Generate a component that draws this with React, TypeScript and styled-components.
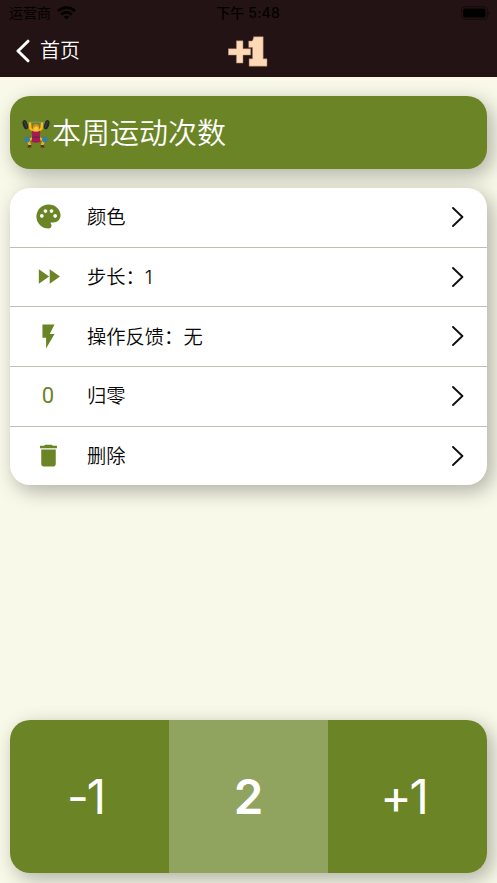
import React from "react";
import styled, { createGlobalStyle } from "styled-components";

const GREEN = "#6b8426";

const GlobalStyle = createGlobalStyle`
  * { box-sizing: border-box; }
  body {
    margin: 0;
    background: #f9f9e9;
    font-family: Inter, "Noto Sans CJK SC", sans-serif;
    font-weight: 400;
  }
`;

const Screen = styled.main`
  width: 100%;
  height: 883px;
  display: flex;
  flex-direction: column;
  overflow: hidden;
  background: #f9f9e9;
`;

const Header = styled.header`
  flex: none;
  height: 77px;
  background: #231314;
`;

const StatusBar = styled.div`
  height: 26px;
  padding: 0 7px 0 9px;
  display: grid;
  grid-template-columns: 1fr auto 1fr;
  align-items: center;
  color: #030101;
  font-size: 14px;
  line-height: 26px;
`;

const Carrier = styled.div`
  display: flex;
  align-items: center;
  gap: 6px;
`;

const Clock = styled.div`
  margin-right: 3px;
  font-weight: 500;
  letter-spacing: 0.15px;
`;

const Power = styled.div`
  display: flex;
  justify-content: flex-end;
`;

const NavBar = styled.nav`
  height: 51px;
  padding: 0 17px 2px 15px;
  display: grid;
  grid-template-columns: 1fr auto 1fr;
  align-items: center;
`;

const BackButton = styled.button`
  display: flex;
  align-items: center;
  gap: 10px;
  padding: 0;
  border: 0;
  background: none;
  color: #fff;
  font: 350 20px/30px Inter, "Noto Sans CJK SC", sans-serif;
`;

const BackLabel = styled.span`
  padding-top: 1px;
`;

const Content = styled.div`
  flex: 1;
  display: flex;
  flex-direction: column;
  padding: 19px 10px 10px;
`;

const Card = styled.section`
  flex: none;
  border-radius: 20px;
  box-shadow: 5px 6px 20px rgba(0, 0, 0, 0.3);
`;

const TitleCard = styled(Card)`
  height: 73px;
  padding: 2px 11px 0 12px;
  display: flex;
  align-items: center;
  gap: 2px;
  background: ${GREEN};
`;

const Title = styled.h1`
  margin: 0;
  color: #fff;
  font-size: 29px;
  line-height: 40px;
  font-weight: 350;
`;

const Menu = styled(Card)`
  height: 297.4px;
  margin-top: 19px;
  display: flex;
  flex-direction: column;
  overflow: hidden;
  background: #fff;
`;

const MenuRow = styled.div`
  flex: 1;
  display: grid;
  grid-template-columns: 77px 1fr 12px;
  align-items: center;
  padding-right: 23px;

  & + & { border-top: 1px solid #bfc0b0; }
`;

const RowIcon = styled.span`
  display: flex;
  justify-content: center;
  padding: 0 1px 1px 0;
  color: ${GREEN};
  font-family: Roboto, sans-serif;
  font-size: 22px;
  font-weight: 400;
`;

const RowLabel = styled.span`
  color: #080808;
  font-size: 19.3px;
  line-height: 28px;
  font-weight: 350;
`;

const Counter = styled(Card)`
  height: 153.4px;
  margin-top: auto;
  display: grid;
  grid-template-columns: repeat(3, 1fr);
  overflow: hidden;
`;

const CounterCell = styled.button<{ $total?: boolean }>`
  padding: ${(p) => (p.$total ? "0" : "0 8px 0 0")};
  border: 0;
  color: #fff;
  background: ${(p) => (p.$total ? "#90a45f" : GREEN)};
  font-family: Inter, sans-serif;
  font-size: 47.5px;
  font-weight: ${(p) => (p.$total ? 600 : 400)};
  letter-spacing: ${(p) => (p.$total ? "0" : "-2.2px")};
`;

const Wifi = () => (
  <svg width="19" height="14" viewBox="0 0 19 14" fill="none" stroke="currentColor" strokeWidth="2.7">
    <path d="M1 5.1C5.7.5 13.3.5 18 5.1M4.2 8.5c3-2.8 7.6-2.8 10.6 0" />
    <path d="M9.5 13.6 6.7 10.8c1.6-1.4 4-1.4 5.6 0z" fill="currentColor" stroke="none" />
  </svg>
);

const Battery = () => (
  <svg width="29" height="14" viewBox="0 0 29 14">
    <rect x=".6" y=".6" width="25.8" height="12.8" rx="3.7" fill="none" stroke="#170b0c" strokeWidth="1.1" />
    <rect x="2.2" y="2.4" width="22.3" height="9.2" rx="1.8" fill="#000" />
    <path d="M27.6 5v4c1.3-.6 1.3-3.4 0-4z" fill="#120809" />
  </svg>
);

const BackArrow = () => (
  <svg width="15" height="24" viewBox="0 0 15 24" fill="none">
    <path d="M13 2.2 3 12l10 9.8" stroke="#fff" strokeWidth="3" strokeLinecap="round" strokeLinejoin="round" />
  </svg>
);

const Logo = () => (
  <svg width="40" height="32" viewBox="0 0 40 32" fill="#ffd8b5" stroke="#9b7c69" strokeWidth=".5">
    <path d="M8.4 5.8h6.6v7.9h7.7v6.4H15v8H8.4v-8H.3v-6.4h8.1z" />
    <path d="M25.6 1.7h9.6v22.1H39v7.4H21.1v-7.4h3.4V12.4h-3.8V6h3.4c.8-.8 1.3-2.4 1.5-4.3z" />
  </svg>
);

const Chevron = () => (
  <svg width="12" height="21" viewBox="0 0 12 21" fill="none">
    <path d="m1 1 9.4 9L1 19" stroke="#111" strokeWidth="1.9" strokeLinecap="round" strokeLinejoin="round" />
  </svg>
);

const Glyph = ({ d }: { d: string }) => (
  <svg width="29" height="29" viewBox="0 0 24 24" fill="currentColor">
    <path d={d} />
  </svg>
);

const PALETTE =
  "M12 2C6.49 2 2 6.49 2 12s4.49 10 10 10a2.5 2.5 0 0 0 2.5-2.5c0-.61-.23-1.2-.64-1.67a.53.53 0 0 1-.13-.33c0-.28.22-.5.5-.5H16c3.31 0 6-2.69 6-6 0-4.96-4.49-9-10-9zm5.5 11c-.83 0-1.5-.67-1.5-1.5s.67-1.5 1.5-1.5 1.5.67 1.5 1.5-.67 1.5-1.5 1.5zm-3-4c-.83 0-1.5-.67-1.5-1.5S13.67 6 14.5 6s1.5.67 1.5 1.5S15.33 9 14.5 9zM5 11.5c0-.83.67-1.5 1.5-1.5s1.5.67 1.5 1.5S7.33 13 6.5 13 5 12.33 5 11.5zm6-4c0 .83-.67 1.5-1.5 1.5S8 8.33 8 7.5 8.67 6 9.5 6s1.5.67 1.5 1.5z";
const FORWARD = "M4 18l8.5-6L4 6v12zm9-12v12l8.5-6L13 6z";
const FLASH = "M7 2v11h3v9l7-12h-4l4-8z";
const TRASH =
  "M6 19c0 1.1.9 2 2 2h8c1.1 0 2-.9 2-2V7H6v12zM19 4h-3.5q-.2-1-1.2-1H9.7q-1 0-1.2 1H5v2h14V4z";

const Lifter = () => (
  <svg width="28" height="29" viewBox="0 0 28 29">
    <path d="M3 4.1Q14 1.8 25 4.1" fill="none" stroke="#90908b" strokeWidth=".9" />
    <g fill="#25292c">
      <ellipse cx="3.3" cy="5.7" rx="2.4" ry="4.8" transform="rotate(-18 3.3 5.7)" />
      <ellipse cx="24.7" cy="5.7" rx="2.4" ry="4.8" transform="rotate(18 24.7 5.7)" />
    </g>
    <path d="M2.2 2.5Q3.8 5 4.7 8.6M25.8 2.5Q24.2 5 23.3 8.6" fill="none" stroke="#545b60" strokeWidth=".6" />
    <path d="M8 4.5 8.4 9.4l4 4.1M20 4.5l-.4 4.9-4 4.1" fill="none" stroke="#fbb910" strokeWidth="2.5" strokeLinecap="round" />
    <path d="m10.5 19.5-4.5 1.8 2 5M17.5 19.5l4.5 1.8-2 5" fill="none" stroke="#f9ad14" strokeWidth="2.7" />
    <path d="M9.6 11.5q4.4 2.4 8.8 0L17.8 18l.6 5q-4.4 1.6-8.8 0l.6-5z" fill="#a51955" />
    <path d="M10.3 17.5h7.4v1.6h-7.4z" fill="#6d2347" />
    <ellipse cx="14" cy="9" rx="2.8" ry="3.4" fill="#ffc533" />
    <path d="M11.2 8.8c-.8-5 6.4-5 5.6 0-.7-1-1.6-1.7-2.7-1.9-.7.9-1.8 1.5-2.9 1.9z" fill="#e98613" />
    <circle cx="5.2" cy="20.6" r="2.8" fill="#2f7faf" />
    <circle cx="22.8" cy="20.6" r="2.8" fill="#2f7faf" />
    <path d="M6.3 26h3v2.5H5.3zM18.7 26h3l1 2.5h-4z" fill="#4d373b" />
  </svg>
);

const rows: { label: string; icon: React.ReactNode }[] = [
  { label: "颜色", icon: <Glyph d={PALETTE} /> },
  { label: "步长：1", icon: <Glyph d={FORWARD} /> },
  { label: "操作反馈：无", icon: <Glyph d={FLASH} /> },
  { label: "归零", icon: "0" },
  { label: "删除", icon: <Glyph d={TRASH} /> },
];

export default function App() {
  return (
    <Screen>
      <GlobalStyle />
      <Header>
        <StatusBar>
          <Carrier>运营商<Wifi /></Carrier>
          <Clock>下午 5:48</Clock>
          <Power><Battery /></Power>
        </StatusBar>
        <NavBar>
          <BackButton><BackArrow /><BackLabel>首页</BackLabel></BackButton>
          <Logo />
        </NavBar>
      </Header>
      <Content>
        <TitleCard>
          <Lifter />
          <Title>本周运动次数</Title>
        </TitleCard>
        <Menu>
          {rows.map((row) => (
            <MenuRow key={row.label}>
              <RowIcon>{row.icon}</RowIcon>
              <RowLabel>{row.label}</RowLabel>
              <Chevron />
            </MenuRow>
          ))}
        </Menu>
        <Counter>
          <CounterCell>-1</CounterCell>
          <CounterCell $total>2</CounterCell>
          <CounterCell>+1</CounterCell>
        </Counter>
      </Content>
    </Screen>
  );
}
